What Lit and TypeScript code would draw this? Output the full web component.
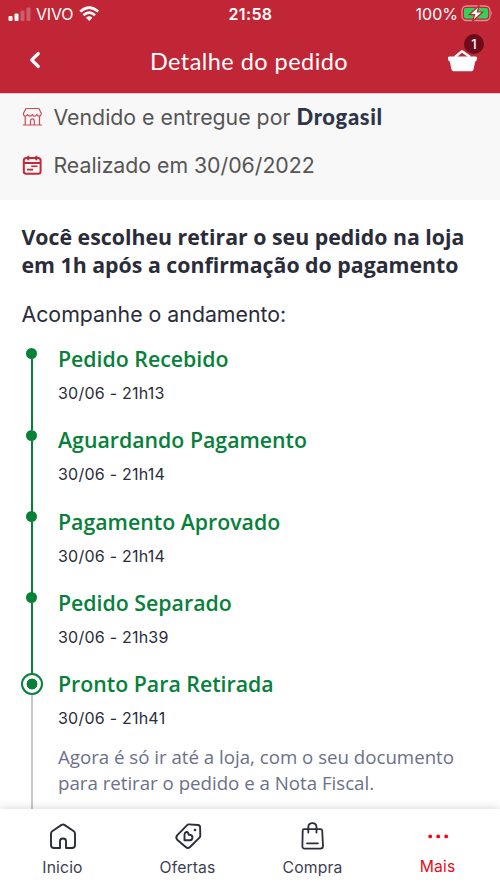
import { LitElement, html, css } from "lit";
import { customElement } from "lit/decorators.js";

interface Step {
  title: string;
  date: string;
  note?: string[];
}

const STEPS: Step[] = [
  { title: "Pedido Recebido", date: "30/06 - 21h13" },
  { title: "Aguardando Pagamento", date: "30/06 - 21h14" },
  { title: "Pagamento Aprovado", date: "30/06 - 21h14" },
  { title: "Pedido Separado", date: "30/06 - 21h39" },
  {
    title: "Pronto Para Retirada",
    date: "30/06 - 21h41",
    note: ["Agora é só ir até a loja, com o seu documento", "para retirar o pedido e a Nota Fiscal."],
  },
];

@customElement("order-header")
class OrderHeader extends LitElement {
  static styles = css`
    :host { display: block; flex: none; height: 93px; background: #c02635; color: #fff; box-shadow: 0 1px 0 #f3c9cd; z-index: 1; }
    svg { display: block; }
    .status { display: grid; grid-template-columns: 1fr auto 1fr; height: 28px; align-items: center; padding: 0 7px 0 8px; font: 400 16px/28px Inter, sans-serif; }
    .left, .right { display: flex; align-items: center; }
    .left { gap: 6px; }
    .right { justify-content: flex-end; gap: 3px; }
    .clock { font-weight: 600; letter-spacing: 0.35px; }
    .carrier { letter-spacing: -0.2px; margin-left: -1px; }
    .bar { display: grid; grid-template-columns: 60px 1fr 60px; height: 65px; align-items: center; }
    .back { margin: 0 0 2px 28px; }
    .title { text-align: center; font: 400 23.5px/30px Lato, sans-serif; letter-spacing: 0.45px; padding: 1px 2px 0 0; }
    .cart { position: relative; width: 31px; margin-left: 7px; }
    .badge { position: absolute; left: 17px; top: -15px; width: 20px; height: 20px; border-radius: 50%; background: #6d0a1c; font: 500 13px/20px Inter, sans-serif; text-align: center; }
  `;
  render() {
    return html`
      <div class="status">
        <div class="left">
          <svg width="23" height="16" viewBox="0 0 23 16" fill="#fff">
            <rect x="0.5" y="10" width="4" height="5" rx="1" /><rect x="6.5" y="7.5" width="4" height="7.5" rx="1" />
            <g opacity=".25"><rect x="12.5" y="4.5" width="4" height="10.5" rx="1" /><rect x="18.5" y="1.5" width="4" height="13.5" rx="1" /></g>
          </svg>
          <span class="carrier">VIVO</span>
          <svg width="21" height="16" viewBox="0 0 21 16" fill="none" stroke="#fff" stroke-width="2.7">
            <path d="M1.2 5.6Q10.2-2.2 19.2 5.6M4.4 9.2Q10.2 4.2 16 9.2" /><path d="M10.2 15 7 11.7Q10.2 9 13.4 11.7Z" fill="#fff" stroke="none" />
          </svg>
        </div>
        <span class="clock">21:58</span>
        <div class="right">
          <span>100%</span>
          <svg width="32" height="18" viewBox="0 0 32 18">
            <rect x="1" y="1" width="28" height="14.5" rx="4.5" fill="none" stroke="#e08d95" stroke-width="1.3" />
            <path d="M30.2 5.8q1.8 2.5 0 5Z" fill="#e08d95" />
            <rect x="3" y="3" width="24" height="10.5" rx="2" fill="#32d158" />
            <path d="M18.2 .5 8.3 9.7h5.3l-2 6.6L21.7 7h-5.3Z" fill="#fff" stroke="#c02635" stroke-width="1.2" />
          </svg>
        </div>
      </div>
      <div class="bar">
        <svg class="back" width="14" height="18" viewBox="0 0 14 18" fill="none" stroke="#fff" stroke-width="3.2" stroke-linecap="round" stroke-linejoin="round"><path d="M10.3 2.5 3.7 9l6.6 6.5" /></svg>
        <div class="title">Detalhe do pedido</div>
        <div class="cart">
          <svg width="31" height="23" viewBox="0 0 31 23">
            <path d="M8 8 15 2.2 23 8" fill="none" stroke="#fff" stroke-width="2.4" stroke-linejoin="round" />
            <path d="M2.2 7.5h26.6q1.6 0 1.2 1.8l-.3 2q-.3 1-1.5 1.2l-1.7 8q-.4 1.7-2 1.7H6.5q-1.6 0-2-1.7l-1.7-8q-1.2-.2-1.5-1.2l-.3-2q-.4-1.8 1.2-1.8Z" fill="#fff" />
          </svg>
          <span class="badge">1</span>
        </div>
      </div>
    `;
  }
}

@customElement("order-info")
class OrderInfo extends LitElement {
  static styles = css`
    :host { display: block; flex: none; height: 107px; background: #f8f8f8; }
    .row { display: flex; align-items: center; height: 48px; gap: 12px; padding-left: 22px; white-space: nowrap; font: 400 21.3px/48px Inter, sans-serif; color: #555; }
    svg { flex: none; }
    .sold { letter-spacing: 0; margin-left: -0.5px; }
    .made { letter-spacing: -0.03px; margin-left: -0.5px; }
    .brand { font: 900 22px/24px Lato, sans-serif; color: #2d3548; letter-spacing: 0.65px; }
  `;
  render() {
    return html`
      <div class="row">
        <svg width="20" height="20" viewBox="0 0 20 20" fill="none" stroke="#d04a57" stroke-width="1.2" stroke-linejoin="round">
          <path d="M4 1.5H17L19.3 6.5Q19.2 8.8 17.5 9.2 15.5 9.4 14.9 7.5 13.8 9.5 12.5 9.2 10.8 9 10.3 7.5 9.3 9.4 8 9.2 6.3 9 5.7 7.5 4.8 9.4 3.1 9.2 1.3 8.8 1.4 6.5ZM3.2 9.5V18M17.5 9.5V18M.8 18H20M8.500 18V13.500Q8.500 11.800 10.400 11.800T12.300 13.500V18" />
        </svg>
        <span class="sold">Vendido e entregue por <span class="brand">Drogasil</span></span>
      </div>
      <div class="row">
        <svg width="20" height="20" viewBox="0 0 20 20" fill="none" stroke="#c62838" stroke-width="2">
          <rect x="1.8" y="3" width="16.8" height="15.8" rx="2.5" /><path d="M2 8H18.5M6.3 .8V5.2M14.3 .8V5.2" /><path d="M9.2 11.3H15.5M5 14.6H11" stroke-width="1.6" />
        </svg>
        <span class="made">Realizado em 30/06/2022</span>
      </div>
    `;
  }
}

@customElement("order-timeline")
class OrderTimeline extends LitElement {
  static styles = css`
    :host { display: block; flex: 1; min-height: 0; }
    .step { display: grid; grid-template-columns: 20px 1fr; column-gap: 16px; height: 81.25px; }
    .rail { display: flex; flex-direction: column; align-items: center; }
    .dot { flex: none; width: 11px; height: 11px; border-radius: 50%; background: #07803a; margin-top: 3.3px; }
    .line { flex: 1; width: 2px; background: #07803a; margin-bottom: -4px; }
    .current { height: 140px; }
    .current .dot { box-sizing: border-box; width: 22px; height: 22px; border: 2px solid #07803a; background: radial-gradient(circle, #07803a 5.2px, #fff 5.7px); }
    .current .line { background: #c6c6d0; }
    .body { padding-left: 0.5px; }
    .title { font: 600 21.3px/28px "Open Sans", sans-serif; color: #07803a; white-space: nowrap; }
    .date { margin-top: 10px; font: 400 16px/20px Inter, sans-serif; color: #2a2c3a; letter-spacing: 0.23px; }
    .note { margin-top: 16.3px; font: 400 18.7px/26px "Open Sans", sans-serif; color: #6b7089; white-space: nowrap; letter-spacing: -0.01px; }
  `;
  render() {
    return STEPS.map(
      (s) => html`
        <div class="step ${s.note ? "current" : ""}">
          <div class="rail"><span class="dot"></span><span class="line"></span></div>
          <div class="body">
            <div class="title">${s.title}</div>
            <div class="date">${s.date}</div>
            ${s.note ? html`<div class="note">${s.note.map((l) => html`<div>${l}</div>`)}</div>` : ""}
          </div>
        </div>
      `
    );
  }
}

@customElement("tab-bar")
class TabBar extends LitElement {
  static styles = css`
    :host { flex: none; display: grid; grid-template-columns: repeat(4, 1fr); height: 80px; background: #fff; box-shadow: 0 -2px 8px rgba(0, 0, 0, 0.12); z-index: 1; }
    .tab { display: flex; flex-direction: column; align-items: center; padding-top: 12px; font: 400 15.7px/20px Inter, sans-serif; color: #3c3e50; letter-spacing: 0.15px; }
    svg { margin-bottom: 7px; }
    .active { color: #ee0a1c; }
    .active svg { margin-bottom: 6px; }
  `;
  render() {
    return html`
      <div class="tab">
        <svg width="30" height="30" viewBox="0 0 30 30" fill="none" stroke="#2b2d3c" stroke-width="1.9" stroke-linejoin="round"><path d="M13.6 3.9Q15 3 16.4 3.9L25.5 10Q27 11 27 12.8V24Q27 27 24 27H18V20Q18 17.5 15 17.5T12 20V27H6Q3 27 3 24V12.8Q3 11 4.5 10Z" /></svg>
        <span>Inicio</span>
      </div>
      <div class="tab">
        <svg width="30" height="30" viewBox="0 0 30 30" fill="none" stroke="#2b2d3c" stroke-width="1.9" stroke-linejoin="round"><path d="M13.9 4.3Q14.7 3.3 16.1 3.4L25 4Q27 4.2 27.1 6.2L27.3 14.5Q27.3 15.8 26.5 16.6L17 26Q15 28 12.7 26L4.5 19Q2.3 16.8 4.1 14.4Z" /><path d="M11.5 19.3V13.5Q11.7 11.3 13.4 11 15.5 10.9 15.7 13.8 19 13.5 19.4 16 19.5 19.2 16.8 19.3Z" /><circle cx="22" cy="9" r="1.3" fill="#2b2d3c" stroke="none" /></svg>
        <span>Ofertas</span>
      </div>
      <div class="tab">
        <svg width="30" height="30" viewBox="0 0 30 30" fill="none" stroke="#2b2d3c" stroke-width="1.8" stroke-linecap="round" stroke-linejoin="round"><path d="M6 8.2H22.5Q24 8.2 24.2 9.7L25 25Q25 27.7 22.3 27.7H6.8Q4.3 27.7 4.4 25L4.7 9.7Q4.8 8.2 6 8.2ZM10.3 11.5V6Q10.5 2.2 14.4 2.2T18.5 6V11.5M9 22.3H20" /></svg>
        <span>Compra</span>
      </div>
      <div class="tab active">
        <svg width="30" height="30" viewBox="0 0 30 30" fill="#ee0a1c"><circle cx="7.2" cy="15.4" r="1.9" /><circle cx="15.2" cy="15.4" r="1.9" /><circle cx="23.2" cy="15.4" r="1.9" /></svg>
        <span>Mais</span>
      </div>
    `;
  }
}

@customElement("app-root")
class AppRoot extends LitElement {
  static styles = css`
    :host { display: flex; flex-direction: column; height: 889px; overflow: hidden; background: #fff; }
    .content { flex: 1; min-height: 0; overflow: hidden; display: flex; flex-direction: column; padding: 23px 0 0 21.5px; }
    .heading { font: 700 21.3px/28px "Open Sans", sans-serif; color: #2a2c3a; white-space: nowrap; }
    .sub { margin: 21px 0 17px; font: 400 21.3px/28px Inter, sans-serif; color: #2a2c3a; }
  `;
  render() {
    return html`
      <order-header></order-header>
      <order-info></order-info>
      <main class="content">
        <div class="heading">Você escolheu retirar o seu pedido na loja<br />em 1h após a confirmação do pagamento</div>
        <div class="sub">Acompanhe o andamento:</div>
        <order-timeline></order-timeline>
      </main>
      <tab-bar></tab-bar>
    `;
  }
}
